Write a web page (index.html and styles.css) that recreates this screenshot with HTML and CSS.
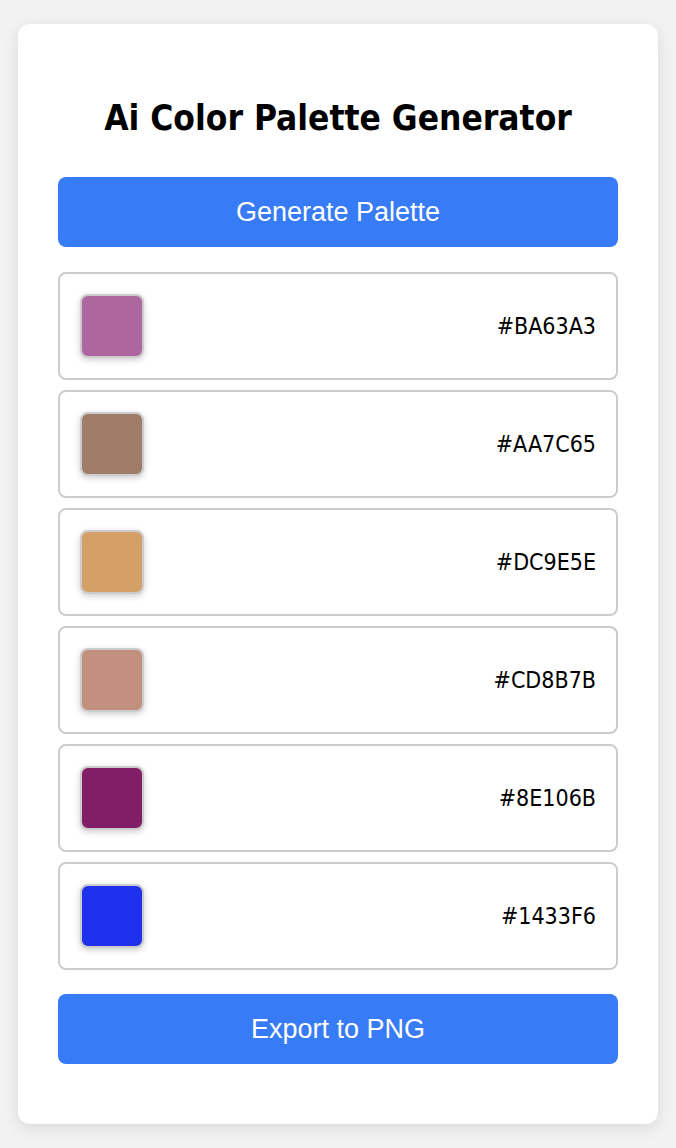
FILE: index.html
```html
<!DOCTYPE html>
<html lang="en">
<head>
    <meta charset="UTF-8">
    <meta name="viewport" content="width=device-width, initial-scale=1.0">
    <title>Ai Color Palette Generator</title>
    <link rel="stylesheet" href="styles.css">
</head>
<body>
    <div class="container">
        <h1>Ai Color Palette Generator</h1>
        <button type="button" class="btn btn-generate">Generate Palette</button>
        <div id="palette">
            <div class="color-row">
                <div class="swatch" style="background-color: #ad66a0;"></div>
                <span class="hex">#BA63A3</span>
            </div>
            <div class="color-row">
                <div class="swatch" style="background-color: #a07d69;"></div>
                <span class="hex">#AA7C65</span>
            </div>
            <div class="color-row">
                <div class="swatch" style="background-color: #d4a067;"></div>
                <span class="hex">#DC9E5E</span>
            </div>
            <div class="color-row">
                <div class="swatch" style="background-color: #c38f7f;"></div>
                <span class="hex">#CD8B7B</span>
            </div>
            <div class="color-row">
                <div class="swatch" style="background-color: #821e65;"></div>
                <span class="hex">#8E106B</span>
            </div>
            <div class="color-row">
                <div class="swatch" style="background-color: #1f30ef;"></div>
                <span class="hex">#1433F6</span>
            </div>
        </div>
        <button type="button" class="btn btn-export">Export to PNG</button>
    </div>
</body>
</html>
```

FILE: styles.css
```css
body {
    font-family: "DejaVu Sans", Verdana, sans-serif;
    background-color: #f2f2f2;
    margin: 0;
    padding: 24px 18px;
}
.container {
    width: 640px;
    box-sizing: border-box;
    padding: 40px 40px 60px;
    background-color: #fff;
    border-radius: 12px;
    box-shadow: 0 4px 16px rgba(0, 0, 0, 0.1);
}
h1 {
    font-size: 35px;
    font-stretch: condensed;
    line-height: 38px;
    text-align: center;
    margin: 35px 0 40px;
    color: #000;
}
.btn {
    display: block;
    width: 100%;
    height: 70px;
    padding: 0;
    background-color: #387bf6;
    color: #fff;
    font-family: "Liberation Sans", Arial, sans-serif;
    font-size: 27px;
    border: none;
    border-radius: 8px;
    cursor: pointer;
}
.btn:hover {
    background-color: #2a66d8;
}
.btn-generate {
    margin-bottom: 25px;
}
.btn-export {
    margin-top: 24px;
}
.color-row {
    display: flex;
    justify-content: space-between;
    align-items: center;
    padding: 20px;
    border: 2px solid #ccc;
    border-radius: 8px;
    margin-bottom: 10px;
}
.color-row:last-child {
    margin-bottom: 0;
}
.swatch {
    width: 64px;
    height: 64px;
    box-sizing: border-box;
    border: 2px solid #ccc;
    border-radius: 8px;
    box-shadow: 0 2px 6px rgba(0, 0, 0, 0.2);
}
.hex {
    font-size: 23px;
    font-stretch: condensed;
    color: #000;
}
```
